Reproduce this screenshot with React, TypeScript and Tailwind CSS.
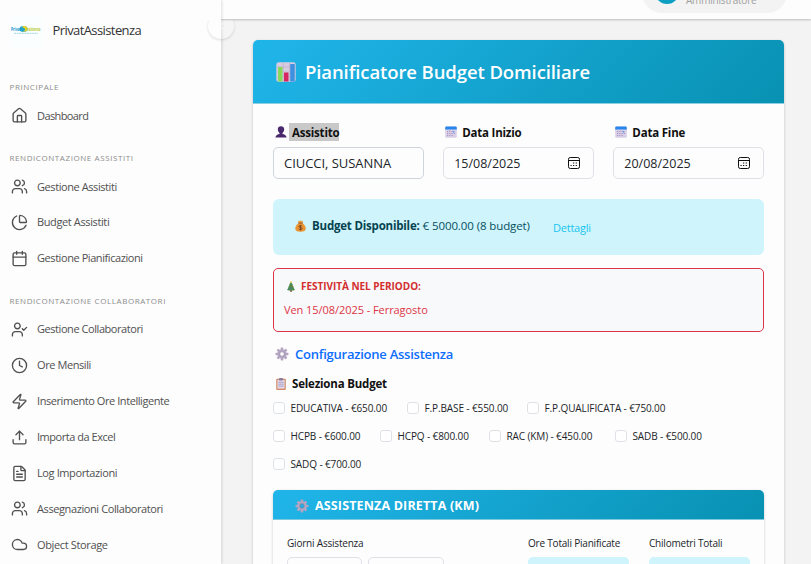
import React from "react";
import {
  ChevronLeft,
  Clock,
  Cloud,
  FileText,
  House,
  Calendar,
  PieChart,
  Upload,
  UserCheck,
  Users,
  Zap,
} from "lucide-react";

type IconType = React.ComponentType<{ className?: string; strokeWidth?: number }>;
type MenuItem = { icon: IconType; label: string; track: string };
type MenuGroup = { title: string; items: MenuItem[] };

const menu: MenuGroup[] = [
  {
    title: "PRINCIPALE",
    items: [{ icon: House, label: "Dashboard", track: "tracking-[-0.6px]" }],
  },
  {
    title: "RENDICONTAZIONE ASSISTITI",
    items: [
      { icon: Users, label: "Gestione Assistiti", track: "tracking-[-0.42px]" },
      { icon: PieChart, label: "Budget Assistiti", track: "tracking-[-0.38px]" },
      { icon: Calendar, label: "Gestione Pianificazioni", track: "tracking-[-0.43px]" },
    ],
  },
  {
    title: "RENDICONTAZIONE COLLABORATORI",
    items: [
      { icon: UserCheck, label: "Gestione Collaboratori", track: "tracking-[-0.44px]" },
      { icon: Clock, label: "Ore Mensili", track: "tracking-[-0.41px]" },
      { icon: Zap, label: "Inserimento Ore Intelligente", track: "tracking-[-0.43px]" },
      { icon: Upload, label: "Importa da Excel", track: "tracking-[-0.47px]" },
      { icon: FileText, label: "Log Importazioni", track: "tracking-[-0.39px]" },
      { icon: Users, label: "Assegnazioni Collaboratori", track: "tracking-[-0.4px]" },
      { icon: Cloud, label: "Object Storage", track: "tracking-[-0.36px]" },
    ],
  },
];

function Logo() {
  return (
    <svg viewBox="0 0 32 32" className="h-8 w-8 shrink-0 overflow-visible">
      <rect width="32" height="32" rx="4" fill="#fafefe" />
      <ellipse cx="13.5" cy="14" rx="4" ry="3" fill="#25a5c9" />
      <path d="M12 12c2-1.800 5-.8 5.500 1.500s-2 3.500-5 3c2-.5 3-1.500 2.500-2.500s-2-1.500-3-2z" fill="#f3d51d" />
      <text x="1" y="15.500" fontSize="5" fontWeight="700" fill="#1593cf" fontFamily="Open Sans, sans-serif" textLength="10" lengthAdjust="spacingAndGlyphs">Privat</text>
      <text x="15.500" y="15.500" fontSize="4.500" fontWeight="700" fill="#b4c832" fontFamily="Open Sans, sans-serif" textLength="15" lengthAdjust="spacingAndGlyphs">Assistenza</text>
      <path d="M4 18.300h24" stroke="#8ecbe2" strokeWidth=".8" strokeDasharray="2 .6" />
    </svg>
  );
}

function ChartEmoji() {
  return (
    <svg viewBox="0 0 20 20" className="h-5 w-5">
      <rect x=".3" y=".3" width="19.400" height="19.400" rx="2.500" fill="#d6cbe0" />
      <path d="M1 5h18M1 10h18M1 15h18M7.300 1v18M13.500 1v18" stroke="#b9a9c8" strokeWidth=".6" />
      <rect x="2" y="5" width="4.500" height="14.500" rx=".5" fill="#86d95b" />
      <rect x="8" y="10.500" width="4.500" height="9" rx=".5" fill="#d62763" />
      <rect x="14.200" y="2" width="4.500" height="17.500" rx=".5" fill="#3d8fe0" />
    </svg>
  );
}

function PersonEmoji() {
  return (
    <svg viewBox="0 0 12 12" className="h-3 w-3">
      <path d="M6 .3c2 0 3.200 1.200 3.200 3 0 1.500-.7 3-1.700 3.600v1c1.800.4 3.700.9 4.100 3.700H.4c.4-2.800 2.300-3.300 4.100-3.700v-1C3.500 6.300 2.800 4.800 2.800 3.300c0-1.800 1.200-3 3.200-3z" fill="#47296c" />
    </svg>
  );
}

function CalendarEmoji() {
  return (
    <svg viewBox="0 0 12 12" className="h-3 w-3">
      <rect x=".2" y=".4" width="11.600" height="11.400" rx="1.300" fill="#dacfe8" />
      <path d="M.2 3.400V1.700C.2 1 .8.400 1.500.400h9c.7 0 1.300.6 1.300 1.300v1.700z" fill="#2686ee" />
      <path d="M2.200 5.400h1M4.400 5.400h1M6.600 5.400h1M2.200 7.500h1M4.400 7.500h1M6.600 7.500h1M8.800 7.500h1M2.200 9.600h1M4.400 9.600h1M6.600 9.600h1" stroke="#9a87b0" strokeWidth="1" />
      <path d="M8.700 5v1.500" stroke="#3b92ef" strokeWidth="1.200" />
    </svg>
  );
}

function MoneyBagEmoji() {
  return (
    <svg viewBox="0 0 11 12" className="h-3 w-[11px]">
      <path d="M3 .8l1.300.5L5.500.3l1.300 1L8.200.8 7.300 3.300h-3.600z" fill="#eda13a" />
      <path d="M3.700 3h3.600c2 1.500 3.400 3.500 3.400 5.500 0 2.300-1.700 3.200-5.200 3.200S.3 10.800.3 8.500c0-2 1.400-4 3.400-5.500z" fill="#e89431" />
      <path d="M3.300 3h4.400" stroke="#9f4e34" strokeWidth="1" />
      <path d="M7 6.100c-.6-.7-3-.8-3 .4 0 1.400 3.100.6 3.100 2s-2.500 1.200-3.300.3M5.500 5v5.500" fill="none" stroke="#744027" strokeWidth=".9" />
    </svg>
  );
}

function TreeEmoji() {
  return (
    <svg viewBox="0 0 8 11" className="h-[11px] w-2">
      <path d="M3.300 9h1.400v2H3.300z" fill="#764837" />
      <path d="M4 1l2 3-.5.2 1.500 2-.6.200L8 9c-2 .7-6 .7-8 0l1.600-2.600-.6-.2 1.500-2L2 4z" fill="#4d8a50" />
      <circle cx="4" cy="1.100" r=".9" fill="#e8c538" />
      <circle cx="3" cy="7.400" r=".6" fill="#4b6ec0" />
      <circle cx="5" cy="5.600" r=".5" fill="#c95142" />
    </svg>
  );
}

const teeth = [0, 45, 90, 135, 180, 225, 270, 315];

function GearEmoji() {
  return (
    <svg viewBox="0 0 14 14" className="h-[14px] w-[14px]">
      {teeth.map((a) => (
        <rect key={a} x="5.700" y=".6" width="2.600" height="3.500" rx=".6" fill="#b3a5c2" transform={`rotate(${a} 7 7)`} />
      ))}
      <circle cx="7" cy="7" r="3.500" fill="none" stroke="#b5a7c4" strokeWidth="2.200" />
      <circle cx="7" cy="7" r="2.300" fill="none" stroke="#8d7c9f" strokeWidth=".7" />
    </svg>
  );
}

function ClipboardEmoji() {
  return (
    <svg viewBox="0 0 10 12" className="h-3 w-[10px]">
      <rect x=".2" y=".7" width="9.600" height="11.200" rx="1" fill="#d48b66" />
      <rect x="1.400" y="2" width="7.200" height="8.600" fill="#e2daec" />
      <rect x="3" y="0" width="4" height="2.400" rx=".7" fill="#8c7b9c" />
      <path d="M2.300 4.300h5.400M2.300 6.200h5.400M2.300 8.100h5.400" stroke="#a594b7" strokeWidth=".8" />
    </svg>
  );
}

function PickerIcon() {
  return (
    <svg viewBox="0 0 12 12" className="h-3 w-3" fill="none" stroke="#111">
      <rect x=".5" y=".5" width="11" height="11" rx="1.800" strokeWidth="1" />
      <path d="M.5 3.500h11" strokeWidth="1" />
      <path d="M5 6h1.200M7.700 6h1.200M2.500 8.500h1.200M5 8.500h1.200M7.700 8.500h1.200" strokeWidth="1.200" />
    </svg>
  );
}

function Sidebar() {
  return (
    <aside className="relative z-10 h-full w-[221px] shrink-0 bg-[#fdfdfd] shadow-[1px_0_3px_rgba(0,0,0,0.13)]">
      <div className="flex h-[62px] items-center pl-[9.500px]">
        <Logo />
        <span className="ml-[11px] text-[13px] tracking-[-0.59px] text-[#333]">PrivatAssistenza</span>
      </div>
      <nav className="pt-px">
        {menu.map((g) => (
          <section key={g.title} className="pt-[13px]">
            <h2 className="flex h-[22px] items-center pl-[9.500px] text-[8px] tracking-[0.58px] whitespace-nowrap text-[#8c8c8c]">{g.title}</h2>
            {g.items.map((it) => (
              <a key={it.label} className="flex h-[35.900px] items-center pl-[11px] text-[#505050]">
                <it.icon className="h-[17px] w-[17px] shrink-0" strokeWidth={1.9} />
                <span className={`ml-[9px] text-[11px] whitespace-nowrap text-[#505050] ${it.track}`}>{it.label}</span>
              </a>
            ))}
          </section>
        ))}
      </nav>
      <button className="absolute top-[13px] left-[208px] flex h-[26px] w-[26px] items-center justify-center rounded-full bg-white/20 text-white [clip-path:inset(7px_-4px_-5px_-4px)] shadow-[0_1px_3px_rgba(0,0,0,0.14)]">
        <ChevronLeft className="h-3 w-3" />
      </button>
    </aside>
  );
}

function TopBar() {
  return (
    <header className="flex h-[19px] shrink-0 items-start justify-end overflow-hidden bg-[#fdfdfd] pr-[24px]">
      <div className="-mt-[27px] flex h-10 w-[145px] items-center rounded-full bg-[#f3f3f3] pl-[13px]">
        <span className="mt-[-3px] h-[24px] w-[24px] rounded-full bg-[#0d9fc3]" />
        <span className="mt-[14px] ml-[7px] text-[10px] leading-3 tracking-[-0.2px] text-[#a0a0a0]">Amministratore</span>
      </div>
    </header>
  );
}

type FieldProps = {
  icon: React.ReactNode;
  label: string;
  value: string;
  date?: boolean;
  selected?: boolean;
};

function Field({ icon, label, value, date, selected }: FieldProps) {
  return (
    <div>
      <div className="flex h-[18px] items-center pl-[2px]">
        <span className="flex w-[12px] justify-center">{icon}</span>
        <b className={`ml-[2px] flex h-[18px] items-center pt-px pl-[3px] text-[11.500px] tracking-[-0.200px] text-[#111] ${selected ? "bg-[#c8c8c8]" : ""}`}>{label}</b>
      </div>
      <div className={`mt-[6px] flex h-8 items-center justify-between rounded-[5px] border pl-[10px] whitespace-nowrap text-[#212529] ${date ? "border-[#dee2e6] pr-[13px] text-[12.500px]" : "border-[#ced4da] text-[13px] tracking-[-0.040px]"}`}>
        <span className="pt-[2px]">{value}</span>
        {date && <PickerIcon />}
      </div>
    </div>
  );
}

const budgets: { label: string; w: string }[][] = [
  [
    { label: "EDUCATIVA - €650.00", w: "w-[134px]" },
    { label: "F.P.BASE - €550.00", w: "w-[120px]" },
    { label: "F.P.QUALIFICATA - €750.00", w: "w-[150px]" },
  ],
  [
    { label: "HCPB - €600.00", w: "w-[107px]" },
    { label: "HCPQ - €800.00", w: "w-[109px]" },
    { label: "RAC (KM) - €450.00", w: "w-[126px]" },
    { label: "SADB - €500.00", w: "w-[110px]" },
  ],
  [{ label: "SADQ - €700.00", w: "w-[107px]" }],
];

function BudgetChoices() {
  return (
    <div className="mt-px">
      {budgets.map((row, i) => (
        <div key={i} className="flex h-7 items-center">
          {row.map((b) => (
            <label key={b.label} className={`flex shrink-0 items-center ${b.w}`}>
              <span className="h-3 w-3 shrink-0 rounded-[3px] border border-[#dee2e6] bg-white" />
              <span className="ml-[5.500px] text-[10px] tracking-[-0.110px] whitespace-nowrap text-[#212529]">{b.label}</span>
            </label>
          ))}
        </div>
      ))}
    </div>
  );
}

function DirectCare() {
  return (
    <section className="mt-[12px] h-[140px] rounded-[5px] bg-[#fdfdfd] shadow-[0_1px_3px_rgba(0,0,0,0.2)]">
      <h3 className="flex h-[30px] items-center rounded-t-[5px] border-b border-[#7fc9de] bg-linear-[135deg] from-[#20b5ea] to-[#0891b2] pt-[3px] pl-[22px] text-white">
        <GearEmoji />
        <span className="ml-[6px] text-[12.500px] font-bold tracking-[0.160px]">ASSISTENZA DIRETTA (KM)</span>
      </h3>
      <div className="flex pt-[15px] pl-[14px] text-[10px] tracking-[-0.200px] whitespace-nowrap text-[#212529]">
        <div className="w-[241px]">
          <div className="h-4 leading-4">Giorni Assistenza</div>
          <div className="mt-[6px] flex gap-[6px]">
            <span className="h-8 w-[75px] rounded-[5px] border border-[#dee2e6]" />
            <span className="h-8 w-[76px] rounded-[5px] border border-[#dee2e6]" />
          </div>
        </div>
        <div className="w-[121px]">
          <div className="h-4 leading-4">Ore Totali Pianificate</div>
          <div className="mt-[6px] h-8 w-[101px] rounded-[5px] bg-[#cff4fc]" />
        </div>
        <div className="w-[101px]">
          <div className="h-4 leading-4">Chilometri Totali</div>
          <div className="mt-[6px] h-8 w-[101px] rounded-[5px] bg-[#cff4fc]" />
        </div>
      </div>
    </section>
  );
}

export default function App() {
  return (
    <div className="flex h-[564px] w-[811px] overflow-hidden bg-[#f3f3f3] font-['Open_Sans','Noto_Sans',sans-serif]">
      <Sidebar />
      <div className="flex min-w-0 flex-1 flex-col">
        <div className="shadow-[0_1px_2px_rgba(0,0,0,0.22)]">
          <TopBar />
        </div>
        <main className="px-8 pt-[21px]">
          <article className="h-[640px] w-[531px] rounded-[5px] bg-[#fdfdfd] shadow-[0_1px_3px_rgba(0,0,0,0.2)]">
            <h1 className="flex h-16 items-center rounded-t-[5px] border-b border-[#8dcfe2] bg-linear-[135deg] from-[#20b5ea] to-[#0891b2] pt-px pl-[23px] text-white">
              <ChartEmoji />
              <span className="ml-[9px] text-[18.500px] font-semibold tracking-[-0.100px] whitespace-nowrap">Pianificatore Budget Domiciliare</span>
            </h1>
            <div className="px-5 pt-[19px]">
              <div className="grid grid-cols-3 gap-[19.500px]">
                <Field icon={<PersonEmoji />} label="Assistito" value="CIUCCI, SUSANNA" selected />
                <Field icon={<CalendarEmoji />} label="Data Inizio" value="15/08/2025" date />
                <Field icon={<CalendarEmoji />} label="Data Fine" value="20/08/2025" date />
              </div>
              <div className="mt-5 flex h-[56px] items-center rounded-[6px] bg-[#cff4fc] pb-[2px] pl-[22px] text-[11.500px] whitespace-nowrap text-[#055160]">
                <MoneyBagEmoji />
                <b className="ml-[6px] tracking-[-0.200px] text-[#06434f]">Budget Disponibile:</b>
                <span className="ml-[3px] tracking-[-0.100px]">€ 5000.00 (8 budget)</span>
                <a className="mt-[4px] ml-[23px] text-[11px] tracking-[-0.200px] text-[#18c5ee]">Dettagli</a>
              </div>
              <div className="mt-[13px] h-16 rounded-[5px] border border-[#dc3545] bg-[#f8f9fb] pt-[9px] pl-[10px] whitespace-nowrap text-[#dc3545]">
                <div className="flex h-4 items-center pl-[3px]">
                  <TreeEmoji />
                  <b className="ml-[6px] text-[10px] tracking-[-0.040px] text-[#d32f2f]">FESTIVITÀ NEL PERIODO:</b>
                </div>
                <div className="mt-[7px] text-[11px] leading-[18px] tracking-[-0.060px]">Ven 15/08/2025 - Ferragosto</div>
              </div>
              <h2 className="mt-[12px] flex h-5 items-center pl-[2px] text-[#0d6efd]">
                <GearEmoji />
                <span className="ml-[6px] pt-px text-[13px] font-semibold tracking-[-0.240px]">Configurazione Assistenza</span>
              </h2>
              <h3 className="mt-[11px] flex h-[18px] items-center pl-[3px] text-[#111]">
                <ClipboardEmoji />
                <b className="ml-[6px] text-[11.500px] tracking-[-0.200px]">Seleziona Budget</b>
              </h3>
              <BudgetChoices />
              <DirectCare />
            </div>
          </article>
        </main>
      </div>
    </div>
  );
}
